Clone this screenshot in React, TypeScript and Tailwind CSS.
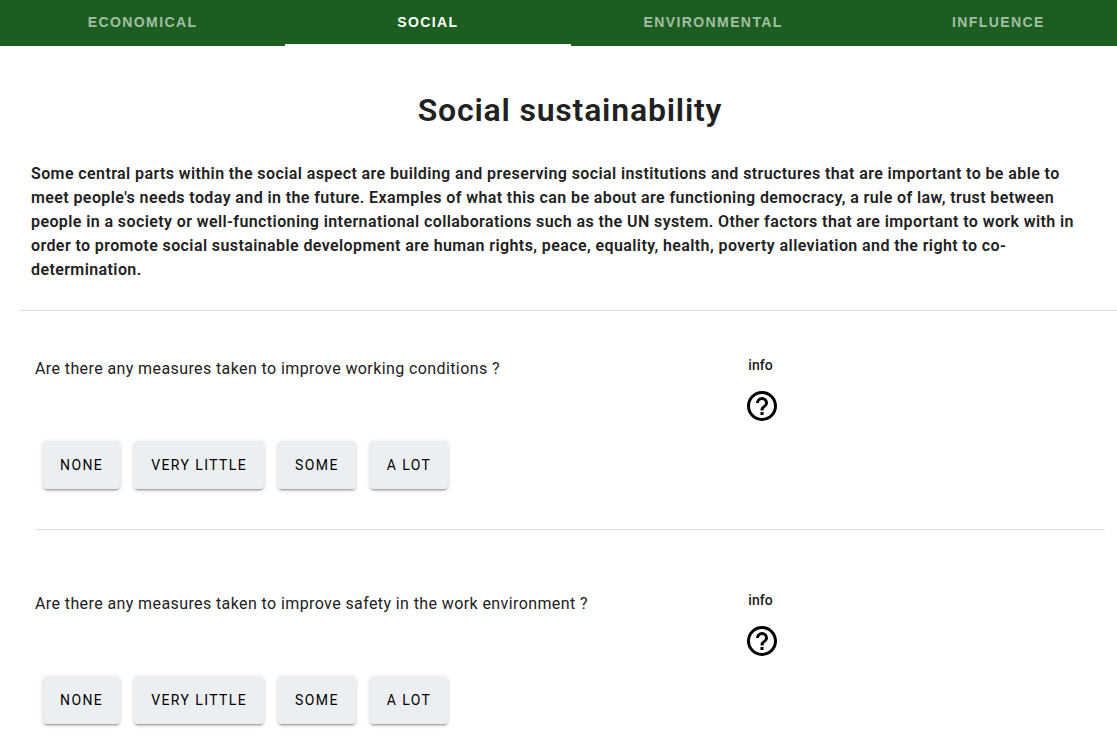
import { useState } from "react";

const tabs = ["Economical", "Social", "Environmental", "Influence"];

const questions = [
  "Are there any measures taken to improve working conditions ?",
  "Are there any measures taken to improve safety in the work environment ?",
];

const answers = ["None", "Very little", "Some", "A lot"];

function HelpIcon() {
  return (
    <svg viewBox="0 0 24 24" className="size-9 fill-black" aria-hidden="true">
      <path d="M11,18H13V16H11V18M12,2A10,10 0 0,0 2,12A10,10 0 0,0 12,22A10,10 0 0,0 22,12A10,10 0 0,0 12,2M12,20C7.59,20 4,16.41 4,12C4,7.59 7.59,4 12,4C16.41,4 20,7.59 20,12C20,16.41 16.41,20 12,20M12,6A4,4 0 0,0 8,10H10A2,2 0 0,1 12,8A2,2 0 0,1 14,10C14,12 11,11.75 11,15H13C13,12.75 16,12.5 16,10A4,4 0 0,0 12,6Z" />
    </svg>
  );
}

function Question({ text }: { text: string }) {
  return (
    <section className="mr-3 ml-4 h-[235px] border-b border-[#e0e0e0] pt-[46px]">
      <div className="grid grid-cols-[2fr_1fr]">
        <p className="pt-4 text-base tracking-wide">{text}</p>
        <div className="flex flex-col items-start pt-3">
          <span className="text-sm leading-6 font-medium">info</span>
          <button type="button" aria-label="Show info" className="-ml-1 pt-[11px]">
            <HelpIcon />
          </button>
        </div>
      </div>
      <div className="flex gap-[14px] px-2 pt-[17px]">
        {answers.map((answer) => (
          <button
            key={answer}
            type="button"
            className="h-12 rounded bg-[#eceff1] px-[17px] text-sm font-normal tracking-widest text-black uppercase shadow-[0_3px_1px_-2px_rgba(0,0,0,0.2),0_2px_2px_0_rgba(0,0,0,0.14),0_1px_5px_0_rgba(0,0,0,0.12)]"
          >
            {answer}
          </button>
        ))}
      </div>
    </section>
  );
}

export default function App() {
  const [active, setActive] = useState("Social");

  return (
    <div className="h-screen overflow-hidden bg-white font-['Roboto',sans-serif] text-[#212121]">
      <nav className="-mr-6 grid h-[46px] grid-cols-4 bg-[#1b5e20]">
        {tabs.map((tab) => (
          <button
            key={tab}
            type="button"
            onClick={() => setActive(tab)}
            className={
              "border-b-2 font-['Liberation_Sans',sans-serif] text-sm font-bold tracking-widest uppercase " +
              (tab === active ? "border-white text-white" : "border-transparent text-white/60")
            }
          >
            {tab}
          </button>
        ))}
      </nav>
      <main className="pl-[19px]">
        <header className="border-b border-[#e0e0e0] pt-10 pr-2 pb-7 pl-3">
          <h1 className="mb-7 text-center text-[32px] leading-[48px] font-semibold tracking-wide">
            Social sustainability
          </h1>
          <p className="pr-4 text-base font-semibold tracking-wide">
            Some central parts within the social aspect are building and preserving social institutions and structures
            that are important to be able to meet people's needs today and in the future. Examples of what this can be
            about are functioning democracy, a rule of law, trust between people in a society or well-functioning
            international collaborations such as the UN system. Other factors that are important to work with in order
            to promote social sustainable development are human rights, peace, equality, health, poverty alleviation
            and the right to co-determination.
          </p>
        </header>
        <div className="-mt-4">
          {questions.map((question) => (
            <Question key={question} text={question} />
          ))}
        </div>
      </main>
    </div>
  );
}
